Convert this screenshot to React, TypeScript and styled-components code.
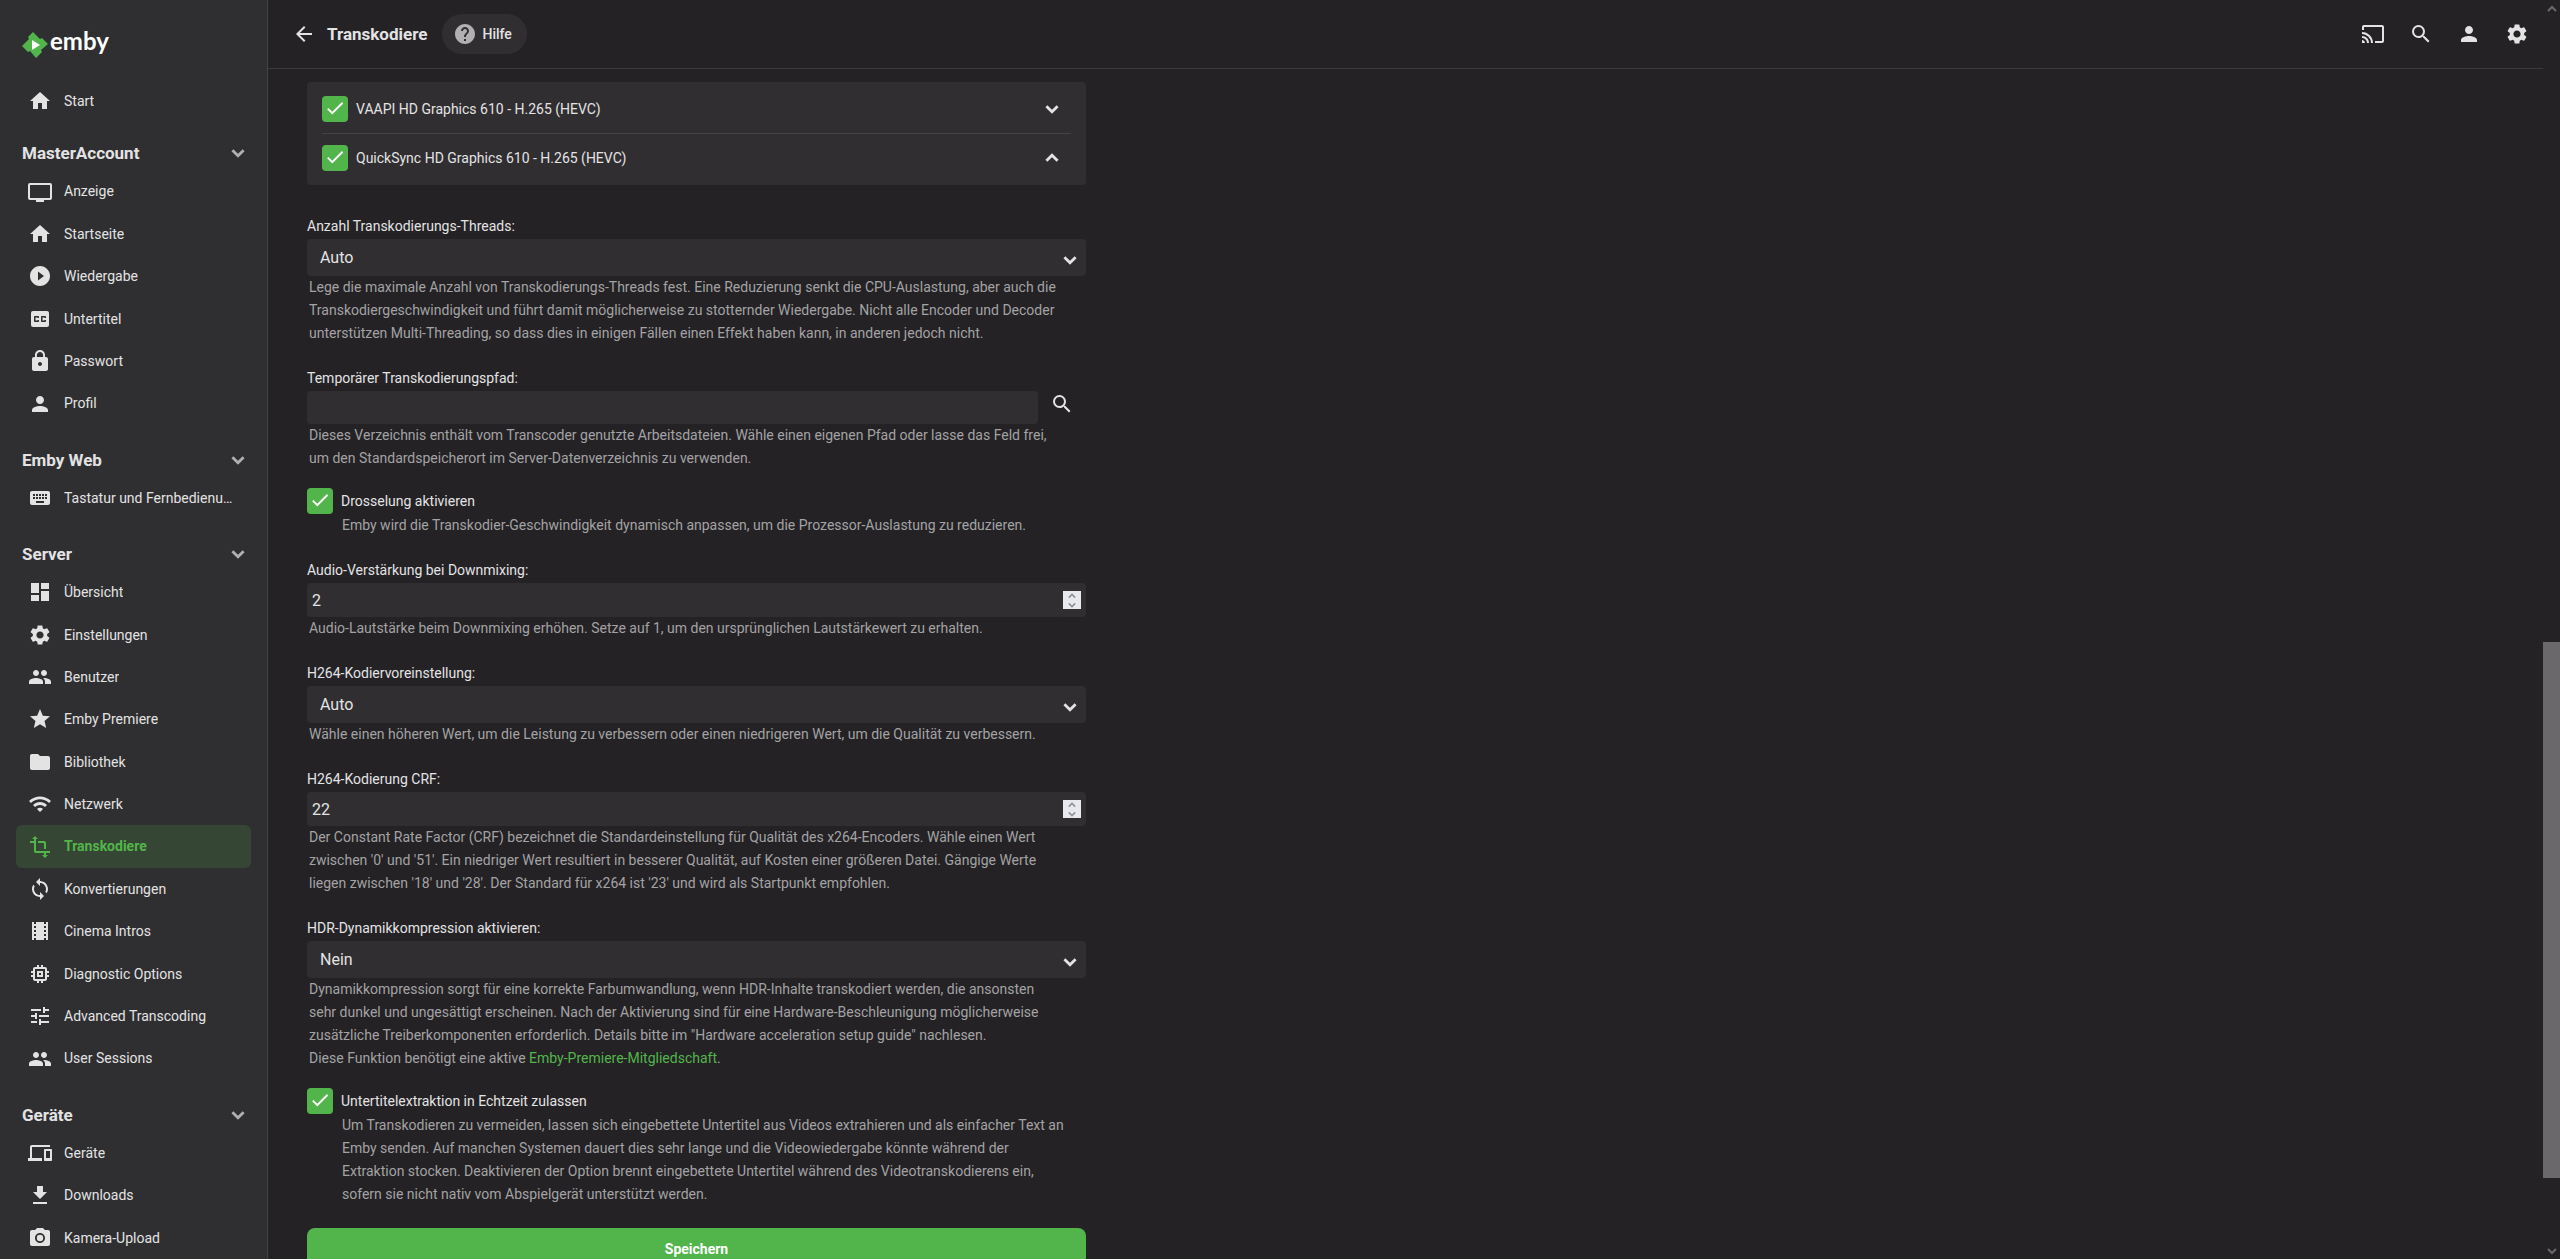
import React from "react";
import type { ReactNode } from "react";
import styled, { createGlobalStyle } from "styled-components";
import {
  MdHome, MdPlayCircleFilled, MdClosedCaption, MdLock, MdPerson, MdKeyboard, MdDashboard, MdSettings,
  MdPeople, MdStar, MdFolder, MdWifi, MdSync, MdTheaters, MdMemory, MdTune, MdDevices, MdPhotoCamera,
  MdArrowBack, MdHelp, MdCast, MdSearch,
} from "react-icons/md";

const GlobalStyle = createGlobalStyle`
  *, *::before, *::after { box-sizing: border-box; }
  html, body, #root { height: 100%; }
  body {
    margin: 0;
    overflow: hidden;
    background: #242225;
    color: #e3e3e4;
    font-family: Roboto, "Noto Sans", sans-serif;
    font-size: 14px;
  }
  button, input, select { font-family: inherit; color: inherit; }
`;

const Shell = styled.div`
  display: flex;
  height: 100%;
`;

const Sidebar = styled.nav`
  flex: 0 0 268px;
  overflow: hidden;
  padding: 29px 16px 0;
  background: #2f2f31;
  border-right: 1px solid #444246;
`;

const Logo = styled.a`
  display: flex;
  align-items: center;
  gap: 2px;
  height: 32px;
  padding-left: 6px;
  margin-bottom: 19px;
  color: #fff;
  text-decoration: none;
`;

const LogoMark = styled.svg`
  width: 26px;
  height: 26px;
`;

const LogoWord = styled.span`
  align-self: flex-start;
  font-family: Lato, sans-serif;
  font-size: 24px;
  font-weight: 700;
  line-height: 24px;
`;

const Section = styled.section<{ $tight?: boolean }>`
  margin-bottom: ${(p) => (p.$tight ? 14 : 18)}px;
`;

const SectionToggle = styled.button`
  display: flex;
  align-items: center;
  justify-content: space-between;
  width: 100%;
  height: 34px;
  padding: 0 6px;
  border: 0;
  background: none;
  font-size: 17px;
  font-weight: 700;

  svg {
    color: #b0b0b1;
  }
`;

const NavLink = styled.a<{ $active?: boolean }>`
  display: flex;
  align-items: center;
  gap: 12px;
  padding: 10px 14px 10px 12px;
  border-radius: 6px;
  background: ${(p) => (p.$active ? "#364634" : "transparent")};
  color: ${(p) => (p.$active ? "#52b54b" : "#e3e3e4")};
  font-weight: ${(p) => (p.$active ? 700 : 400)};
  font-size: 14px;
  line-height: 1.6;
  text-decoration: none;
`;

const NavIcon = styled.span`
  display: grid;
  flex: 0 0 24px;
  height: 22px;
  place-items: center;
  font-size: 24px;

  svg {
    margin: -2px 0;
  }
`;

const NavText = styled.span`
  overflow: hidden;
  text-overflow: ellipsis;
  white-space: nowrap;
`;

const Page = styled.div`
  display: flex;
  flex: 1;
  flex-direction: column;
  min-width: 0;
`;

const Header = styled.header`
  display: flex;
  flex: none;
  align-items: center;
  height: 69px;
  padding: 0 16px 0 24px;
  border-bottom: 1px solid #3b393c;
`;

const IconButton = styled.button`
  display: grid;
  place-items: center;
  width: 22px;
  height: 48px;
  padding: 0;
  border: 0;
  background: none;
`;

const Title = styled.h1`
  margin: 0 15px 0 13px;
  font-size: 17px;
  font-weight: 700;
`;

const HelpLink = styled.a`
  display: flex;
  align-items: center;
  gap: 5px;
  height: 40px;
  padding: 0 15px 0 11px;
  border-radius: 20px;
  background: #302e31;
  color: #e3e3e4;
  font-size: 14px;
  font-weight: 500;
  text-decoration: none;

  svg {
    color: #b0b0b1;
  }
`;

const Actions = styled.div`
  display: flex;
  gap: 26px;
  margin-left: auto;
`;

const Viewport = styled.main`
  flex: 1;
  min-height: 0;
  overflow: hidden;
  padding: 13px 39px 0;
`;

const Form = styled.form`
  width: 100%;
  max-width: 779px;
`;

const CodecCard = styled.div`
  margin-bottom: 30px;
  padding: 3px 15px 4px;
  border-radius: 4px;
  background: #302e31;
`;

const CodecRow = styled.div`
  display: flex;
  align-items: center;
  justify-content: space-between;
  height: 48px;
  padding-right: 8px;

  & + & {
    border-top: 1px solid #444246;
  }
`;

const CheckLabel = styled.label`
  display: flex;
  align-items: center;
  gap: 8px;
  font-size: 14px;
  line-height: 26px;
`;

const CheckInput = styled.input`
  flex: none;
  width: 26px;
  height: 26px;
  margin: 0;
  appearance: none;
  border-radius: 4px;
  background: #302e31;

  &:checked {
    background: #52b54b url("data:image/svg+xml,%3Csvg xmlns='http://www.w3.org/2000/svg' viewBox='0 0 24 24'%3E%3Cpath fill='%23fff' d='M9 16.17 4.83 12l-1.42 1.41L9 19 21 7l-1.41-1.41z'/%3E%3C/svg%3E") center 1px / 22px no-repeat;
  }
`;

const Field = styled.div`
  margin-bottom: 22px;
`;

const CheckGroup = styled(Field)`
  margin-top: -4px;
`;

const FieldLabel = styled.label`
  display: block;
  margin-bottom: 2px;
  font-size: 14px;
  line-height: 22px;
`;

const Hint = styled.p<{ $indent?: boolean }>`
  margin: 0;
  padding: ${(p) => (p.$indent ? "0 16px 0 35px" : "0 25px 0 2px")};
  color: #a3a2a4;
  font-size: 14px;
  line-height: 23px;

  a {
    color: #52b54b;
    text-decoration: none;
  }
`;

const SelectBox = styled.div`
  display: grid;
  align-items: center;

  > * {
    grid-area: 1 / 1;
  }

  svg {
    justify-self: end;
    margin: 4px 9px 0 0;
    pointer-events: none;
  }
`;

const Select = styled.select`
  width: 100%;
  height: 37px;
  padding: 0 13px;
  appearance: none;
  border: 0;
  border-radius: 4px;
  background: #302e31;
  font-size: 16px;
`;

const InputRow = styled.div`
  display: flex;
  gap: 12px;
  padding-right: 14px;
`;

const TextInput = styled.input`
  flex: 1;
  min-width: 0;
  height: 33px;
  padding: 0 5px;
  border: 0;
  border-radius: 4px;
  background: #302e31;
  font-size: 16px;
`;

const BrowseButton = styled(IconButton)`
  height: 26px;
`;

const NumberBox = styled.div`
  display: flex;
  align-items: center;
  height: 34px;
  padding-right: 5px;
  border-radius: 4px;
  background: #302e31;
`;

const NumberInput = styled(TextInput)`
  appearance: textfield;

  &::-webkit-inner-spin-button {
    display: none;
  }
`;

const Spinner = styled.span`
  display: grid;
  width: 18px;
  height: 18px;
  background: #e9e9ed;
  color: #8f8f9d;
`;

const SpinButton = styled.button`
  display: grid;
  place-items: center;
  height: 9px;
  padding: 0;
  border: 0;
  background: none;
`;

const SaveButton = styled.button`
  display: block;
  width: 100%;
  height: 42px;
  border: 0;
  border-radius: 8px;
  background: #52b54b;
  color: #fff;
  font-size: 14px;
  font-weight: 700;
`;

const Scrollbar = styled.div`
  display: flex;
  flex: 0 0 17px;
  flex-direction: column;
`;

const ScrollArrow = styled.div`
  display: grid;
  flex: 0 0 17px;
  place-items: center;
  color: #6b696c;
`;

const Track = styled.div<{ $grow: number; $thumb?: boolean }>`
  flex: ${(p) => p.$grow} 1 0;
  background: ${(p) => (p.$thumb ? "#6a686b" : "transparent")};
`;

const Svg = ({ children }: { children: ReactNode }) => (
  <svg width={24} height={24} viewBox="0 0 24 24" fill="currentColor" aria-hidden="true">{children}</svg>
);

const TvIcon = () => (
  <svg width={24} height={24} viewBox="0 0 24 24" fill="none" stroke="currentColor" strokeWidth={2} aria-hidden="true">
    <rect x="1" y="4" width="22" height="15" rx="1" />
    <path d="M8 21h8" />
  </svg>
);

const TransformIcon = () => (
  <Svg><path d="M22 18v-2H8V4h2L7 1 4 4h2v2H2v2h4v8c0 1.100.9 2 2 2h8v2h-2l3 3 3-3h-2v-2h4zM10 8h6v6h2V8c0-1.100-.9-2-2-2h-6v2z" /></Svg>
);

const DownloadIcon = () => (
  <Svg><path d="M19 9h-4V3H9v6H5l7 7 7-7zM5 19v2h14v-2H5z" /></Svg>
);

const Chevron = ({ up, size = 10 }: { up?: boolean; size?: number }) => (
  <svg width={size} height={size} viewBox="0 0 10 10" fill="none" stroke="currentColor" strokeWidth={2} aria-hidden="true">
    <path d={up ? "M1 7 5 3l4 4" : "M1 3l4 4 4-4"} />
  </svg>
);

type Item = { label: string; icon: ReactNode; active?: boolean };

const sections: { title: string; items: Item[] }[] = [
  {
    title: "MasterAccount",
    items: [
      { label: "Anzeige", icon: <TvIcon /> },
      { label: "Startseite", icon: <MdHome /> },
      { label: "Wiedergabe", icon: <MdPlayCircleFilled /> },
      { label: "Untertitel", icon: <MdClosedCaption /> },
      { label: "Passwort", icon: <MdLock /> },
      { label: "Profil", icon: <MdPerson /> },
    ],
  },
  { title: "Emby Web", items: [{ label: "Tastatur und Fernbedienung", icon: <MdKeyboard /> }] },
  {
    title: "Server",
    items: [
      { label: "Übersicht", icon: <MdDashboard /> },
      { label: "Einstellungen", icon: <MdSettings /> },
      { label: "Benutzer", icon: <MdPeople /> },
      { label: "Emby Premiere", icon: <MdStar /> },
      { label: "Bibliothek", icon: <MdFolder /> },
      { label: "Netzwerk", icon: <MdWifi /> },
      { label: "Transkodiere", icon: <TransformIcon />, active: true },
      { label: "Konvertierungen", icon: <MdSync /> },
      { label: "Cinema Intros", icon: <MdTheaters /> },
      { label: "Diagnostic Options", icon: <MdMemory /> },
      { label: "Advanced Transcoding", icon: <MdTune /> },
      { label: "User Sessions", icon: <MdPeople /> },
    ],
  },
  {
    title: "Geräte",
    items: [
      { label: "Geräte", icon: <MdDevices /> },
      { label: "Downloads", icon: <DownloadIcon /> },
      { label: "Kamera-Upload", icon: <MdPhotoCamera /> },
    ],
  },
];

const NavItem = ({ label, icon, active }: Item) => (
  <NavLink href="#" $active={active} aria-current={active ? "page" : undefined}>
    <NavIcon>{icon}</NavIcon>
    <NavText>{label}</NavText>
  </NavLink>
);

const SelectField = ({ id, label, value, children }: { id: string; label: string; value: string; children: ReactNode }) => (
  <Field>
    <FieldLabel htmlFor={id}>{label}</FieldLabel>
    <SelectBox>
      <Select id={id} defaultValue={value}><option>{value}</option></Select>
      <Chevron size={14} />
    </SelectBox>
    <Hint>{children}</Hint>
  </Field>
);

const NumberField = ({ id, label, value, children }: { id: string; label: string; value: number; children: ReactNode }) => (
  <Field>
    <FieldLabel htmlFor={id}>{label}</FieldLabel>
    <NumberBox>
      <NumberInput id={id} type="number" defaultValue={value} />
      <Spinner>
        <SpinButton type="button" aria-label="Erhöhen"><Chevron up size={8} /></SpinButton>
        <SpinButton type="button" aria-label="Verringern"><Chevron size={8} /></SpinButton>
      </Spinner>
    </NumberBox>
    <Hint>{children}</Hint>
  </Field>
);

const CheckField = ({ label, children }: { label: string; children: ReactNode }) => (
  <CheckGroup>
    <CheckLabel><CheckInput type="checkbox" defaultChecked />{label}</CheckLabel>
    <Hint $indent>{children}</Hint>
  </CheckGroup>
);

export default function App() {
  return (
    <>
      <GlobalStyle />
      <Shell>
        <Sidebar>
          <Logo href="#">
            <LogoMark viewBox="0 0 26 26" aria-hidden="true">
              <path d="M11 0 6 5 7 7 0 14 6 20 8 19 14 26 20 20 19 18 26 12 20 6 18 7z" fill="#52b54b" />
              <path d="M10 8v10l8-5z" fill="#fff" />
            </LogoMark>
            <LogoWord>emby</LogoWord>
          </Logo>
          <Section $tight><NavItem label="Start" icon={<MdHome />} /></Section>
          {sections.map((s) => (
            <Section key={s.title}>
              <SectionToggle type="button">{s.title}<Chevron size={14} /></SectionToggle>
              {s.items.map((i) => <NavItem key={i.label} {...i} />)}
            </Section>
          ))}
        </Sidebar>
        <Page>
          <Header>
            <IconButton type="button" aria-label="Zurück"><MdArrowBack size={24} /></IconButton>
            <Title>Transkodiere</Title>
            <HelpLink href="#"><MdHelp size={24} />Hilfe</HelpLink>
            <Actions>
              <IconButton type="button" aria-label="Cast"><MdCast size={24} /></IconButton>
              <IconButton type="button" aria-label="Suche"><MdSearch size={24} /></IconButton>
              <IconButton type="button" aria-label="Benutzer"><MdPerson size={24} /></IconButton>
              <IconButton type="button" aria-label="Einstellungen"><MdSettings size={24} /></IconButton>
            </Actions>
          </Header>
          <Viewport>
            <Form>
              <CodecCard>
                <CodecRow>
                  <CheckLabel><CheckInput type="checkbox" defaultChecked />VAAPI HD Graphics 610 - H.265 (HEVC)</CheckLabel>
                  <IconButton type="button" aria-label="Nach unten"><Chevron size={14} /></IconButton>
                </CodecRow>
                <CodecRow>
                  <CheckLabel><CheckInput type="checkbox" defaultChecked />QuickSync HD Graphics 610 - H.265 (HEVC)</CheckLabel>
                  <IconButton type="button" aria-label="Nach oben"><Chevron up size={14} /></IconButton>
                </CodecRow>
              </CodecCard>
              <SelectField id="threads" label="Anzahl Transkodierungs-Threads:" value="Auto">
                Lege die maximale Anzahl von Transkodierungs-Threads fest. Eine Reduzierung senkt die CPU-Auslastung, aber auch die Transkodiergeschwindigkeit und führt damit möglicherweise zu stotternder Wiedergabe. Nicht alle Encoder und Decoder unterstützen Multi-Threading, so dass dies in einigen Fällen einen Effekt haben kann, in anderen jedoch nicht.
              </SelectField>
              <Field>
                <FieldLabel htmlFor="path">Temporärer Transkodierungspfad:</FieldLabel>
                <InputRow>
                  <TextInput id="path" type="text" />
                  <BrowseButton type="button" aria-label="Durchsuchen"><MdSearch size={24} /></BrowseButton>
                </InputRow>
                <Hint>
                  Dieses Verzeichnis enthält vom Transcoder genutzte Arbeitsdateien. Wähle einen eigenen Pfad oder lasse das Feld frei, um den Standardspeicherort im Server-Datenverzeichnis zu verwenden.
                </Hint>
              </Field>
              <CheckField label="Drosselung aktivieren">
                Emby wird die Transkodier-Geschwindigkeit dynamisch anpassen, um die Prozessor-Auslastung zu reduzieren.
              </CheckField>
              <NumberField id="boost" label="Audio-Verstärkung bei Downmixing:" value={2}>
                Audio-Lautstärke beim Downmixing erhöhen. Setze auf 1, um den ursprünglichen Lautstärkewert zu erhalten.
              </NumberField>
              <SelectField id="preset" label="H264-Kodiervoreinstellung:" value="Auto">
                Wähle einen höheren Wert, um die Leistung zu verbessern oder einen niedrigeren Wert, um die Qualität zu verbessern.
              </SelectField>
              <NumberField id="crf" label="H264-Kodierung CRF:" value={22}>
                Der Constant Rate Factor (CRF) bezeichnet die Standardeinstellung für Qualität des x264-Encoders. Wähle einen Wert zwischen '0' und '51'. Ein niedriger Wert resultiert in besserer Qualität, auf Kosten einer größeren Datei. Gängige Werte liegen zwischen '18' und '28'. Der Standard für x264 ist '23' und wird als Startpunkt empfohlen.
              </NumberField>
              <SelectField id="hdr" label="HDR-Dynamikkompression aktivieren:" value="Nein">
                Dynamikkompression sorgt für eine korrekte Farbumwandlung, wenn HDR-Inhalte transkodiert werden, die ansonsten sehr dunkel und ungesättigt erscheinen. Nach der Aktivierung sind für eine Hardware-Beschleunigung möglicherweise zusätzliche Treiberkomponenten erforderlich. Details bitte im "Hardware acceleration setup guide" nachlesen.
                <br />
                Diese Funktion benötigt eine aktive <a href="#">Emby-Premiere-Mitgliedschaft</a>.
              </SelectField>
              <CheckField label="Untertitelextraktion in Echtzeit zulassen">
                Um Transkodieren zu vermeiden, lassen sich eingebettete Untertitel aus Videos extrahieren und als einfacher Text an Emby senden. Auf manchen Systemen dauert dies sehr lange und die Videowiedergabe könnte während der Extraktion stocken. Deaktivieren der Option brennt eingebettete Untertitel während des Videotranskodierens ein, sofern sie nicht nativ vom Abspielgerät unterstützt werden.
              </CheckField>
              <SaveButton type="button">Speichern</SaveButton>
            </Form>
          </Viewport>
        </Page>
        <Scrollbar aria-hidden="true">
          <ScrollArrow><Chevron up /></ScrollArrow>
          <Track $grow={625} />
          <Track $grow={536} $thumb />
          <Track $grow={64} />
          <ScrollArrow><Chevron /></ScrollArrow>
        </Scrollbar>
      </Shell>
    </>
  );
}
